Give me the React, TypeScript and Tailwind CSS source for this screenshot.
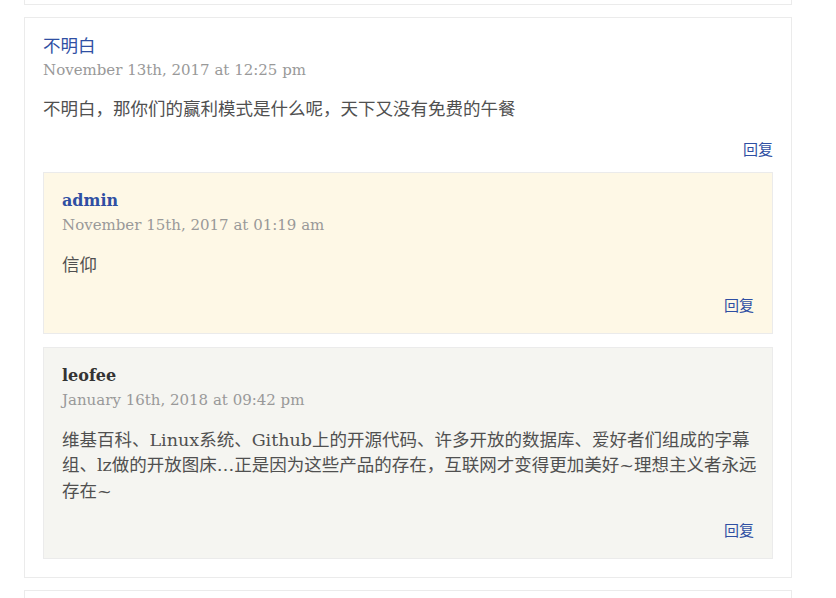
type Reply = {
  name: string;
  date: string;
  body: React.ReactNode;
  tone: "yellow" | "gray";
  nameClass: string;
};

const serif = "font-['DejaVu_Serif','Noto_Sans_CJK_SC',serif]";

const replies: Reply[] = [
  {
    name: "admin",
    date: "November 15th, 2017 at 01:19 am",
    body: "信仰",
    tone: "yellow",
    nameClass: "text-[#2f4fa3] text-[16px] font-bold",
  },
  {
    name: "leofee",
    date: "January 16th, 2018 at 09:42 pm",
    body: (
      <>
        维基百科、Linux系统、Github上的开源代码、许多开放的数据库、爱好者们组成的字幕
        <br />
        组、lz做的开放图床…正是因为这些产品的存在，互联网才变得更加美好~理想主义者永远
        <br />
        存在~
      </>
    ),
    tone: "gray",
    nameClass: "text-[#333] text-[16px] font-bold",
  },
];

function ChildComment({ c, first }: { c: Reply; first: boolean }) {
  return (
    <div
      className={
        (first ? "mt-[11px] " : "mt-[13px] ") +
        "border border-[#ebebeb] px-[18px] pt-[15px] pb-[16px] " +
        (c.tone === "yellow" ? "bg-[#fef8e6]" : "bg-[#f5f5f1]")
      }
    >
      <div className={"leading-[26px] " + c.nameClass}>{c.name}</div>
      <div className="text-[15px] leading-[22px] text-[#999]">{c.date}</div>
      <p className="mt-[17px] mr-[-14px] text-[17.5px] leading-[25.5px] text-[#505050]">{c.body}</p>
      <div className="mt-[16px] flex justify-end">
        <a href="#none" className="text-[15px] leading-[22px] text-[#2f4fa3]">
          回复
        </a>
      </div>
    </div>
  );
}

export default function App() {
  return (
    <div className={"min-h-screen bg-white pl-[24px] " + serif}>
      {/* 위쪽 카드 끝부분 */}
      <div className="h-[5px] w-[768px] border-x border-b border-[#ebebeb]" />

      {/* 댓글 카드 */}
      <div className="mt-[12px] w-[768px] border border-[#ebebeb] px-[18px] pt-[15px] pb-[18px]">
        <div className="text-[17.5px] leading-[26px] text-[#2f4fa3]">不明白</div>
        <div className="text-[15px] leading-[22px] text-[#999]">November 13th, 2017 at 12:25 pm</div>
        <p className="mt-[15px] text-[17.5px] leading-[26px] text-[#505050]">
          不明白，那你们的赢利模式是什么呢，天下又没有免费的午餐
        </p>
        <div className="mt-[17px] flex justify-end">
          <a href="#none" className="text-[15px] leading-[22px] text-[#2f4fa3]">
            回复
          </a>
        </div>
        {replies.map((r, i) => (
          <ChildComment key={r.name} c={r} first={i === 0} />
        ))}
      </div>

      {/* 다음 카드 시작 */}
      <div className="mt-[12px] h-[8px] w-[768px] border-x border-t border-[#ebebeb]" />
    </div>
  );
}
